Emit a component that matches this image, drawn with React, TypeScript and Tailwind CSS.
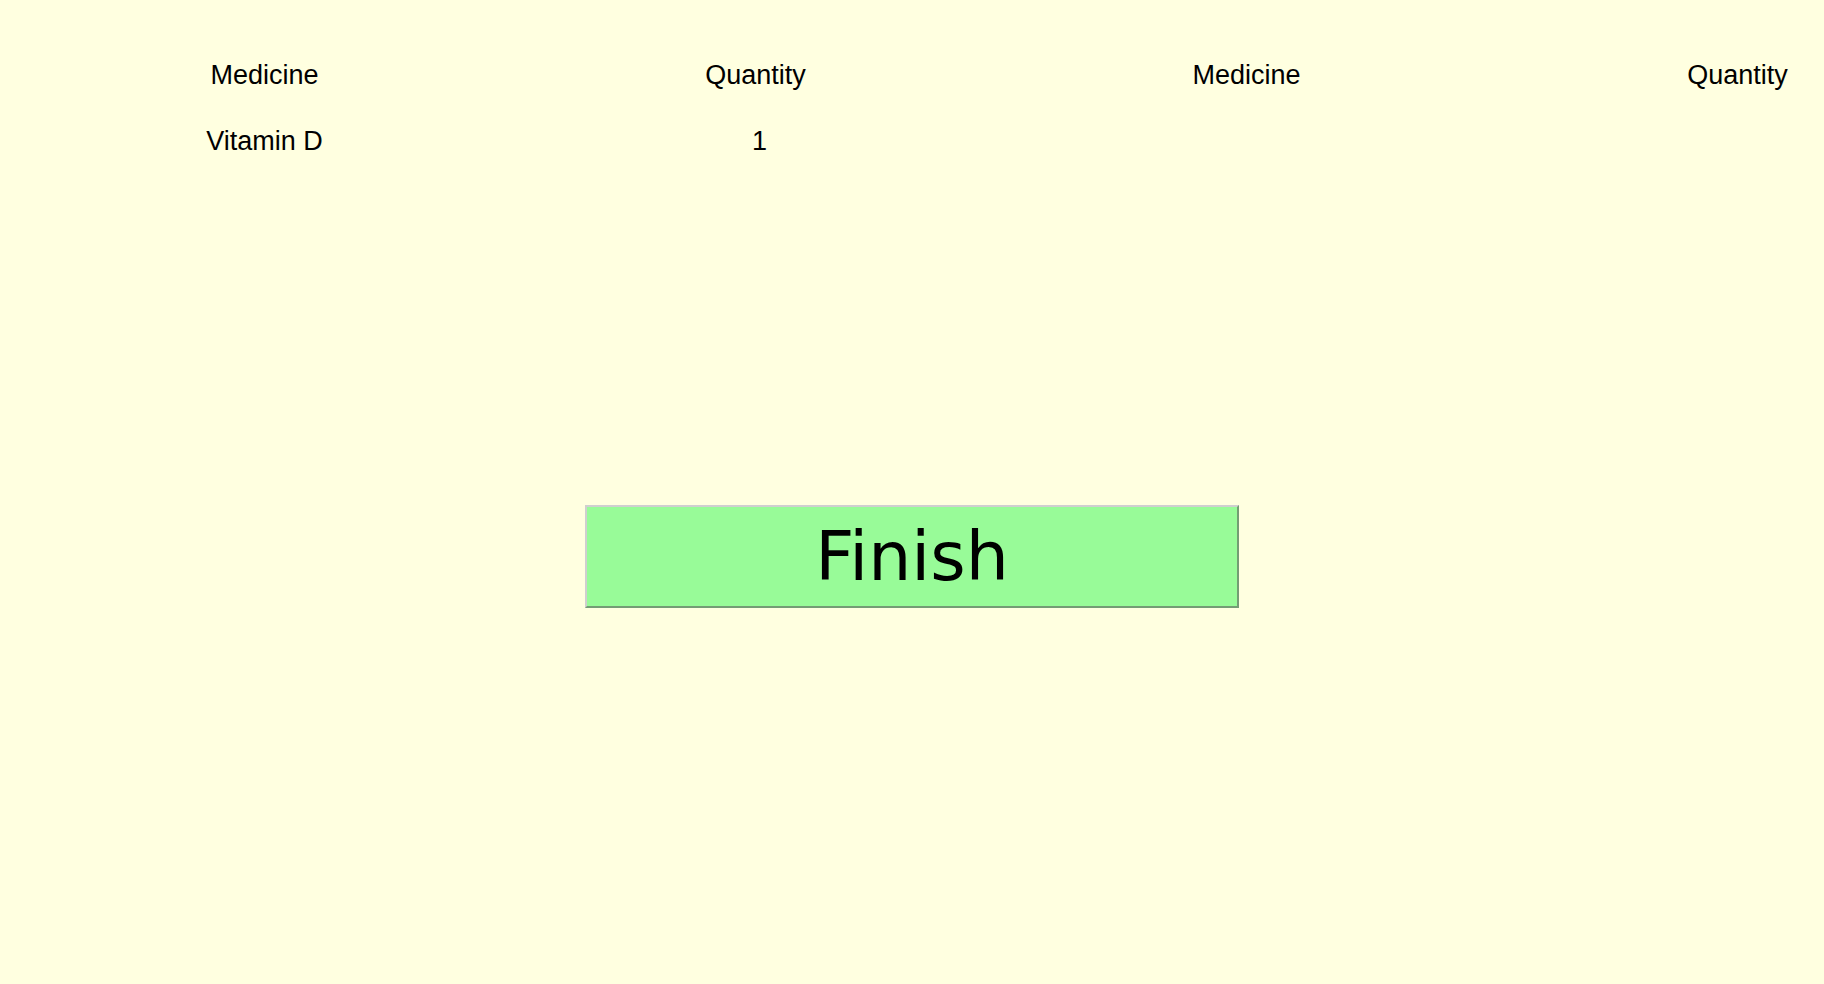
const columns = ["Medicine", "Quantity", "Medicine", "Quantity"];

const rows = [["Vitamin D", "1", "", ""]];

export default function App() {
  return (
    <div className="min-h-screen w-full overflow-hidden bg-[#ffffe0] text-black">
      {/* medicine list */}
      <div className="ml-[19px] pt-[60px] font-['Liberation_Sans',Arial,sans-serif] text-[27px] leading-[31px]">
        <div className="grid grid-cols-[repeat(4,491px)]">
          {columns.map((c, i) => (
            <div key={i} className="text-center">
              {c}
            </div>
          ))}
        </div>
        {rows.map((r, ri) => (
          <div key={ri} className="mt-[35px] grid grid-cols-[repeat(4,491px)]">
            {r.map((cell, ci) => (
              <div key={ci} className={ci % 2 === 1 ? "pl-[8px] text-center" : "text-center"}>
                {cell}
              </div>
            ))}
          </div>
        ))}
      </div>

      <div className="mt-[348px] flex justify-center">
        <button className="h-[103px] w-[654px] border-2 border-t-[#cfcfcf] border-l-[#cfcfcf] border-r-[#749c74] border-b-[#749c74] bg-[#98fb98] font-['DejaVu_Sans',sans-serif] text-[68px] leading-none text-black">
          Finish
        </button>
      </div>
    </div>
  );
}
